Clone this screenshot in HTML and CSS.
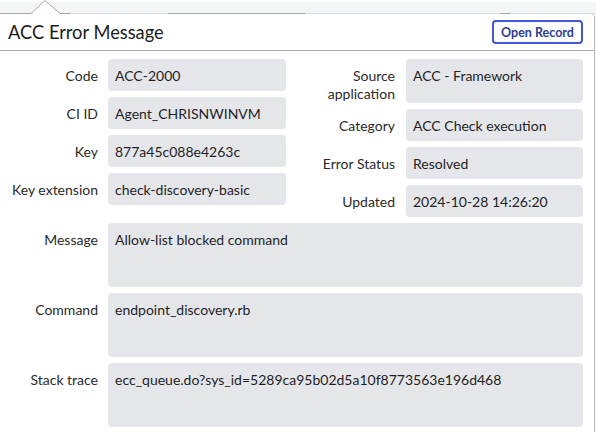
FILE: index.html
```html
<!DOCTYPE html>
<html lang="en">
<head>
    <meta charset="UTF-8">
    <meta name="viewport" content="width=device-width, initial-scale=1.0">
    <title>ACC Error Message</title>
    <link rel="stylesheet" href="styles.css">
</head>
<body>
<div class="backdrop">
    <span class="edge edge-dark edge-1"></span>
    <svg class="caret" width="29" height="14" viewBox="0 0 29 14">
        <path d="M0 13.5 L14 0.5 L29 13.5" fill="#fff" stroke="#a3a6ad" stroke-width="1"/>
    </svg>
    <span class="edge edge-dark edge-2"></span>
    <span class="edge edge-3"></span>
    <span class="edge edge-dark edge-4"></span>
    <span class="edge edge-5"></span>
    <span class="edge edge-dark edge-6"></span>
    <span class="edge edge-7"></span>
</div>

<div class="popover">
    <div class="popover-header">
        <h1>ACC Error Message</h1>
        <button class="open-record">Open Record</button>
    </div>
    <div class="popover-body">
        <div class="field-grid">
            <div class="field-col">
                <div class="field">
                    <div class="label">Code</div>
                    <div class="value">ACC-2000</div>
                </div>
                <div class="field">
                    <div class="label">CI ID</div>
                    <div class="value">Agent_CHRISNWINVM</div>
                </div>
                <div class="field">
                    <div class="label">Key</div>
                    <div class="value">877a45c088e4263c</div>
                </div>
                <div class="field">
                    <div class="label">Key extension</div>
                    <div class="value">check-discovery-basic</div>
                </div>
            </div>
            <div class="field-col">
                <div class="field">
                    <div class="label">Source application</div>
                    <div class="value">ACC - Framework</div>
                </div>
                <div class="field">
                    <div class="label">Category</div>
                    <div class="value">ACC Check execution</div>
                </div>
                <div class="field">
                    <div class="label">Error Status</div>
                    <div class="value">Resolved</div>
                </div>
                <div class="field">
                    <div class="label">Updated</div>
                    <div class="value">2024-10-28 14:26:20</div>
                </div>
            </div>
        </div>
        <div class="field wide">
            <div class="label">Message</div>
            <div class="value">Allow-list blocked command</div>
        </div>
        <div class="field wide">
            <div class="label">Command</div>
            <div class="value">endpoint_discovery.rb</div>
        </div>
        <div class="field wide">
            <div class="label">Stack trace</div>
            <div class="value">ecc_queue.do?sys_id=5289ca95b02d5a10f8773563e196d468</div>
        </div>
    </div>
</div>
</body>
</html>
```

FILE: styles.css
```css
* {
    margin: 0;
    padding: 0;
    box-sizing: border-box;
    font-family: Lato, 'Noto Sans', sans-serif;
}

body {
    background: #fff;
    color: #1f1f1f;
    width: 596px;
    height: 432px;
    overflow: hidden;
}

/* strip of the page behind the popover */
.backdrop {
    display: flex;
    height: 14px;
    background: #f4f5f7;
    border-top: 2px solid #fff;
}
.edge {
    height: 12px;
    border-bottom: 1px solid #d6d8dc;
}
.edge-dark {
    border-bottom-color: #a3a6ad;
}
.edge-1 { width: 31px; }
.edge-2 { width: 10px; }
.edge-3 { width: 98px; }
.edge-4 { width: 137px; }
.edge-5 { width: 195px; }
.edge-6 { width: 10px; }
.edge-7 { flex: 1; }
.caret {
    display: block;
    margin-top: -2px;
    flex-shrink: 0;
}

.popover {
    width: 595px;
    height: 418px;
    border-right: 1px solid #b3b5bb;
    border-top-right-radius: 4px;
    background: #fff;
}

.popover-header {
    display: flex;
    align-items: center;
    justify-content: space-between;
    height: 37px;
    padding: 0 11px 0 8px;
    border-bottom: 1px solid #a9acb3;
}
.popover-header h1 {
    font-size: 18.3px;
    font-weight: 400;
    color: #1c1c1c;
}
.open-record {
    border: 2px solid #4356d8;
    border-radius: 4px;
    background: #fff;
    color: #2f3b96;
    font-size: 12.5px;
    font-weight: 700;
    height: 24px;
    width: 91px;
    cursor: pointer;
}

.popover-body {
    padding: 8px 11px 0 8px;
    display: flex;
    flex-direction: column;
    gap: 6px;
}

.field-grid {
    display: grid;
    grid-template-columns: 1fr 1fr;
    column-gap: 19px;
}
.field-col {
    display: flex;
    flex-direction: column;
    gap: 6px;
}

.field {
    display: grid;
    grid-template-columns: 90px 1fr;
    column-gap: 10px;
    font-size: 14px;
    line-height: 18px;
}
.field-col:last-child .field {
    column-gap: 11px;
}
.label {
    text-align: right;
    padding-top: 8px;
    color: #2a2a2a;
}
.value {
    background: #e5e6ea;
    border-radius: 4px;
    min-height: 32px;
    padding: 8px 7px 6px;
    color: #1f1f1f;
}
.wide .value {
    min-height: 64px;
}
```
